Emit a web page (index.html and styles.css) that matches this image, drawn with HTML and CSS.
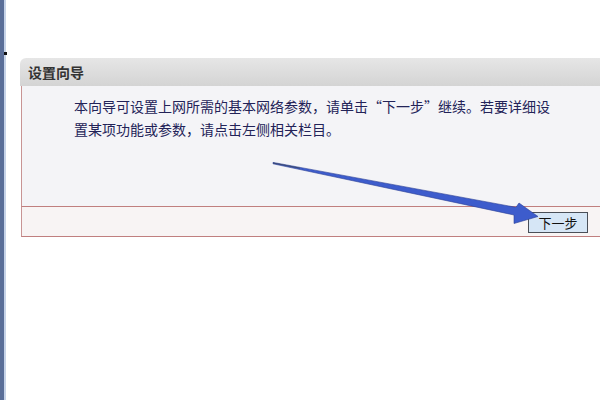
FILE: index.html
```html
<!DOCTYPE html>
<html lang="zh-CN">
<head>
<meta charset="utf-8">
<title>设置向导</title>
<link rel="stylesheet" href="styles.css">
</head>
<body>
<div class="page">
  <div class="sidebar"><span class="mark"></span></div>
  <div class="main">
    <div class="panel">
      <div class="title">设置向导</div>
      <div class="content">
        <p class="desc">本向导可设置上网所需的基本网络参数，请单击“下一步”继续。若要详细设置某项功能或参数，请点击左侧相关栏目。</p>
      </div>
      <div class="footer">
        <button class="next" type="button">下一步</button>
      </div>
    </div>
  </div>
  <svg class="arrow" width="600" height="400" viewBox="0 0 600 400" aria-hidden="true">
    <polygon points="273,162.4 516,207.3 519,203 538,216.5 514,223.5 514,215 273,163.8" fill="#3d5ccc" stroke="#2b3f96" stroke-width="0.6" stroke-linejoin="round"/>
    <line x1="273" y1="163" x2="300" y2="168.2" stroke="#3c4a70" stroke-width="1"/>
  </svg>
</div>
</body>
</html>
```

FILE: styles.css
```css
* { box-sizing: border-box; }
html, body { margin: 0; padding: 0; background: #ffffff; }
body {
  font-family: "Noto Sans CJK SC", "Noto Sans", sans-serif;
}
.page {
  position: relative;
  width: 600px;
  height: 400px;
  display: flex;
  overflow: hidden;
}
.sidebar {
  position: relative;
  width: 6px;
  height: 400px;
  background: linear-gradient(to right, #5a6e98 0, #5a6e98 4px, #c6d3e8 4px, #c6d3e8 6px);
  flex: none;
}
.mark {
  position: absolute;
  left: 4px;
  top: 52px;
  width: 3px;
  height: 3px;
  background: #111;
}
.main {
  flex: 1;
  padding-top: 58px;
  padding-left: 14px;
}
.panel {
  width: 100%;
}
.title {
  height: 28px;
  line-height: 28px;
  padding-left: 8px;
  font-size: 14px;
  font-weight: bold;
  color: #333;
  background: linear-gradient(to bottom, #e6e6e6, #d4d4d4);
  border-top-left-radius: 6px;
}
.content {
  height: 120px;
  margin-left: 1px;
  border-left: 1px solid #c89494;
  background: #f4f4f7;
  padding: 9px 0 0 52px;
}
.desc {
  margin: 0;
  width: 484px;
  font-size: 14px;
  line-height: 23px;
  color: #232358;
}
.footer {
  height: 31px;
  margin-left: 1px;
  border-left: 1px solid #c89494;
  border-top: 1px solid #c07f7f;
  border-bottom: 1px solid #c07f7f;
  background: #f8f4f4;
  display: flex;
  justify-content: flex-end;
  align-items: center;
  padding-right: 12px;
}
.next {
  width: 60px;
  height: 21px;
  padding: 0;
  margin-top: 1px;
  font-family: "Noto Sans CJK SC", sans-serif;
  font-size: 13px;
  line-height: 19px;
  color: #111;
  background: #d6e6f6;
  border: 1px solid #4a4f58;
}
.arrow {
  position: absolute;
  left: 0;
  top: 0;
  pointer-events: none;
}
```
